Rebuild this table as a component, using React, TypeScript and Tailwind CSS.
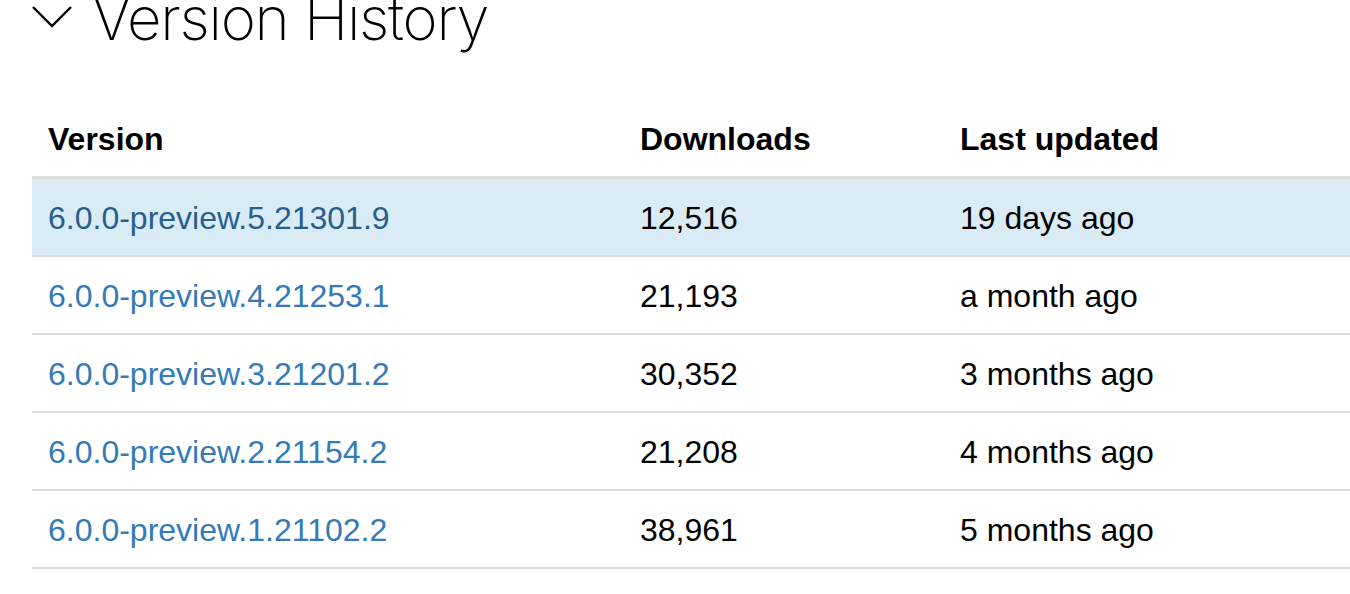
import React from "react";

type VersionRow = {
  version: string;
  downloads: string;
  updated: string;
  current?: boolean;
};

const ROWS: VersionRow[] = [
  { version: "6.0.0-preview.5.21301.9", downloads: "12,516", updated: "19 days ago", current: true },
  { version: "6.0.0-preview.4.21253.1", downloads: "21,193", updated: "a month ago" },
  { version: "6.0.0-preview.3.21201.2", downloads: "30,352", updated: "3 months ago" },
  { version: "6.0.0-preview.2.21154.2", downloads: "21,208", updated: "4 months ago" },
  { version: "6.0.0-preview.1.21102.2", downloads: "38,961", updated: "5 months ago" },
];

const ChevronDown = () => (
  <svg width="42" height="24" viewBox="0 0 42 24" fill="none" className="shrink-0">
    <path d="M2 3 L21 22 L40 3" stroke="#000" strokeWidth="2.4" />
  </svg>
);

export default function App() {
  return (
    <div className="min-h-[594px] bg-white overflow-hidden font-['Liberation_Sans',Arial,sans-serif] text-black">
      <div className="flex items-start pl-[31px] mt-[-15px] h-[115px]">
        <div className="mt-[19px]">
          <ChevronDown />
        </div>
        <h2 className="ml-[19px] font-['Inter',sans-serif] font-extralight text-[60px] leading-[66px] tracking-[-1.3px]">
          Version History
        </h2>
      </div>

      <div className="ml-8 w-[1318px]">
        <div className="grid grid-cols-[592px_320px_1fr] border-b-[3px] border-[#ddd] font-bold text-[32px] leading-[44px]">
          <div className="px-4 pt-[17px] pb-[15px]">Version</div>
          <div className="px-4 pt-[17px] pb-[15px]">Downloads</div>
          <div className="px-4 pt-[17px] pb-[15px]">Last updated</div>
        </div>
        {ROWS.map((row) => (
          <div
            key={row.version}
            className={
              row.current
                ? "grid grid-cols-[592px_320px_1fr] border-b-2 border-[#ddd] bg-[#d9ebf5] text-[32px] leading-[44px]"
                : "grid grid-cols-[592px_320px_1fr] border-b-2 border-[#ddd] text-[32px] leading-[44px]"
            }
          >
            <div className="px-4 pt-[17px] pb-[15px]">
              <a
                href="#"
                className={row.current ? "text-[#285e8e]" : "text-[#337ab7]"}
              >
                {row.version}
              </a>
            </div>
            <div className="px-4 pt-[17px] pb-[15px]">{row.downloads}</div>
            <div className="px-4 pt-[17px] pb-[15px]">{row.updated}</div>
          </div>
        ))}
      </div>
    </div>
  );
}
